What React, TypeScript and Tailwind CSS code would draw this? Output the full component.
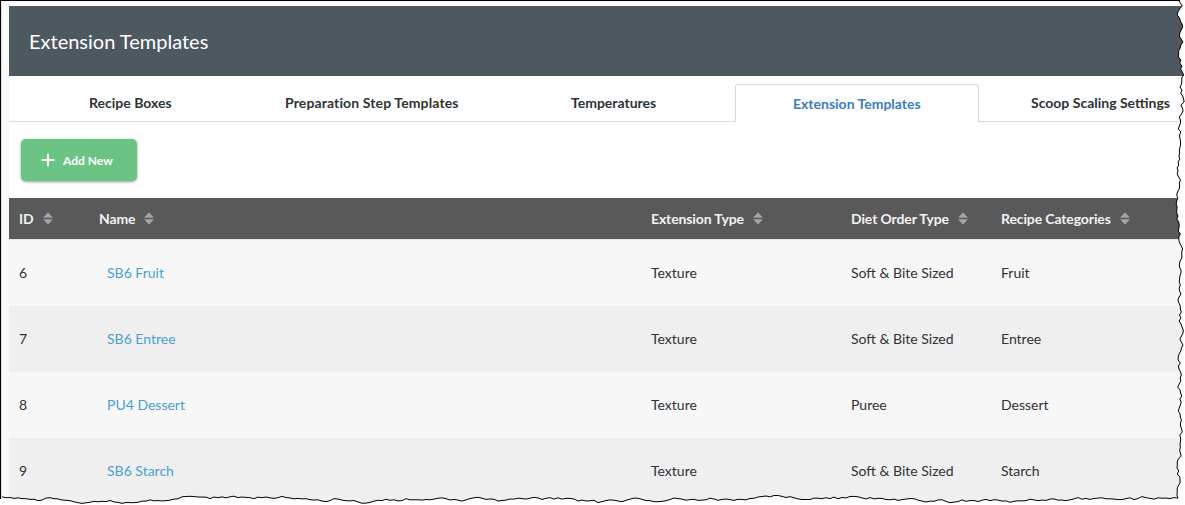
import React from "react";

const tabs = [
  { label: "Recipe Boxes", w: "w-[244px]", pad: "pl-[80px]", extra: "" },
  { label: "Preparation Step Templates", w: "w-[242px]", pad: "pl-[32px]", extra: "tracking-[0.12px]" },
  { label: "Temperatures", w: "w-[240px]", pad: "pl-[76px]", extra: "" },
];

const rows = [
  ["6", "SB6 Fruit", "Texture", "Soft & Bite Sized", "Fruit"],
  ["7", "SB6 Entree", "Texture", "Soft & Bite Sized", "Entree"],
  ["8", "PU4 Dessert", "Texture", "Puree", "Dessert"],
  ["9", "SB6 Starch", "Texture", "Soft & Bite Sized", "Starch"],
];

const cols = "grid grid-cols-[90px_552px_200px_150px_1fr]";

function Sort() {
  return (
    <svg width="10" height="13" viewBox="0 0 10 13" className="ml-[9px] shrink-0" aria-hidden="true">
      <path
        d="M5 0.8 L9.2 5.3 H0.8 Z M0.8 7.7 H9.2 L5 12.2 Z"
        fill="#a4a4a4"
        stroke="#a4a4a4"
        strokeWidth="0.8"
        strokeLinejoin="round"
      />
    </svg>
  );
}

function edgePath() {
  let s = 12345;
  const r = () => {
    s = (s * 16807) % 2147483647;
    return s / 2147483647;
  };
  const pts: [number, number][] = [];
  let walk = 0;
  for (let y = 0; y <= 496; y += 3) {
    walk = walk * 0.6 + (r() - 0.5) * 4;
    pts.push([1180 + Math.sin(y / 41) * 1 + walk, y]);
  }
  walk = 0;
  for (let x = 1178; x >= 0; x -= 4) {
    walk = walk * 0.75 + (r() - 0.5) * 3;
    pts.push([x, 499.5 + Math.sin(x / 47) * 1.5 + walk]);
  }
  return pts.map((p, i) => `${i ? "L" : "M"}${p[0].toFixed(1)} ${p[1].toFixed(1)}`).join(" ");
}

export default function App() {
  const d = edgePath();
  return (
    <div
      className="relative w-[1185px] h-[505px] overflow-hidden bg-white pl-[9px] pt-[6px] text-[14px] text-[#2f3236]"
      style={{ fontFamily: "Lato, 'Open Sans', sans-serif" }}
    >
      <div className="absolute left-[1px] top-[1px] bottom-0 w-[8px] bg-[#f7f9fb]" />
      <div className="relative w-[1176px]">
        <header className="h-[70px] bg-[#4e595f] flex items-center pl-[20px] text-[20px] text-white">
          Extension Templates
        </header>

        <nav className="h-[46px] flex border-b border-[#d5d9de] font-bold text-[#2e3338]">
          {tabs.map((t) => (
            <div key={t.label} className={`${t.w} ${t.pad} ${t.extra} pt-[18px] leading-[17px] whitespace-nowrap`}>
              {t.label}
            </div>
          ))}
          <div className="w-[244px] h-[38px] mt-[8px] border border-b-0 border-[#d5d9de] rounded-t-[3px] bg-white pl-[57px] pt-[10px] leading-[17px] text-[#3b7dbd] whitespace-nowrap">
            Extension Templates
          </div>
          <div className="pl-[52px] pt-[18px] leading-[17px] whitespace-nowrap">Scoop Scaling Settings</div>
        </nav>

        <div className="h-[76px] pl-[12px] pt-[17px]">
          <button className="w-[116px] h-[42px] rounded-[5px] bg-[#6cc484] shadow-[0_1px_3px_rgba(0,0,0,0.4)] flex items-center pl-[20px] pt-[1px] text-white text-[12px] font-bold">
            <svg width="14" height="14" viewBox="0 0 14 14" className="mr-[8px] -mt-[1px]" aria-hidden="true">
              <path d="M7 0.5 V13.5 M0.5 7 H13.5" stroke="#fff" strokeWidth="2" />
            </svg>
            Add New
          </button>
        </div>

        <div className={`${cols} h-[42px] pb-[1px] items-center bg-[#595959] text-[#f2f2f2] font-bold tracking-[-0.12px] border-b border-[#e6e6e6]`}>
          <div className="pl-[10px] flex items-center">ID<Sort /></div>
          <div className="flex items-center">Name<Sort /></div>
          <div className="flex items-center">Extension Type<Sort /></div>
          <div className="flex items-center">Diet Order Type<Sort /></div>
          <div className="flex items-center">Recipe Categories<Sort /></div>
        </div>

        {rows.map((r, i) => (
          <div
            key={r[0]}
            className={`${cols} h-[66px] pb-[2px] items-center ${i % 2 ? "bg-[#efefef]" : "bg-[#f7f7f7]"}`}
          >
            <div className="pl-[10px]">{r[0]}</div>
            <div className="pl-[8px] text-[#4a9fd4]">{r[1]}</div>
            <div>{r[2]}</div>
            <div>{r[3]}</div>
            <div>{r[4]}</div>
          </div>
        ))}
      </div>

      {/* torn-paper screenshot edge */}
      <svg className="absolute inset-0" width="1185" height="505" viewBox="0 0 1185 505" aria-hidden="true">
        <path d={`${d} L0 505 L1185 505 L1185 0 Z`} fill="#fff" />
        <path d={d} fill="none" stroke="#000" strokeWidth="1" />
        <path d="M0 0.5 H1180 M0.5 0 V499" fill="none" stroke="#000" strokeWidth="1.2" />
      </svg>
    </div>
  );
}
